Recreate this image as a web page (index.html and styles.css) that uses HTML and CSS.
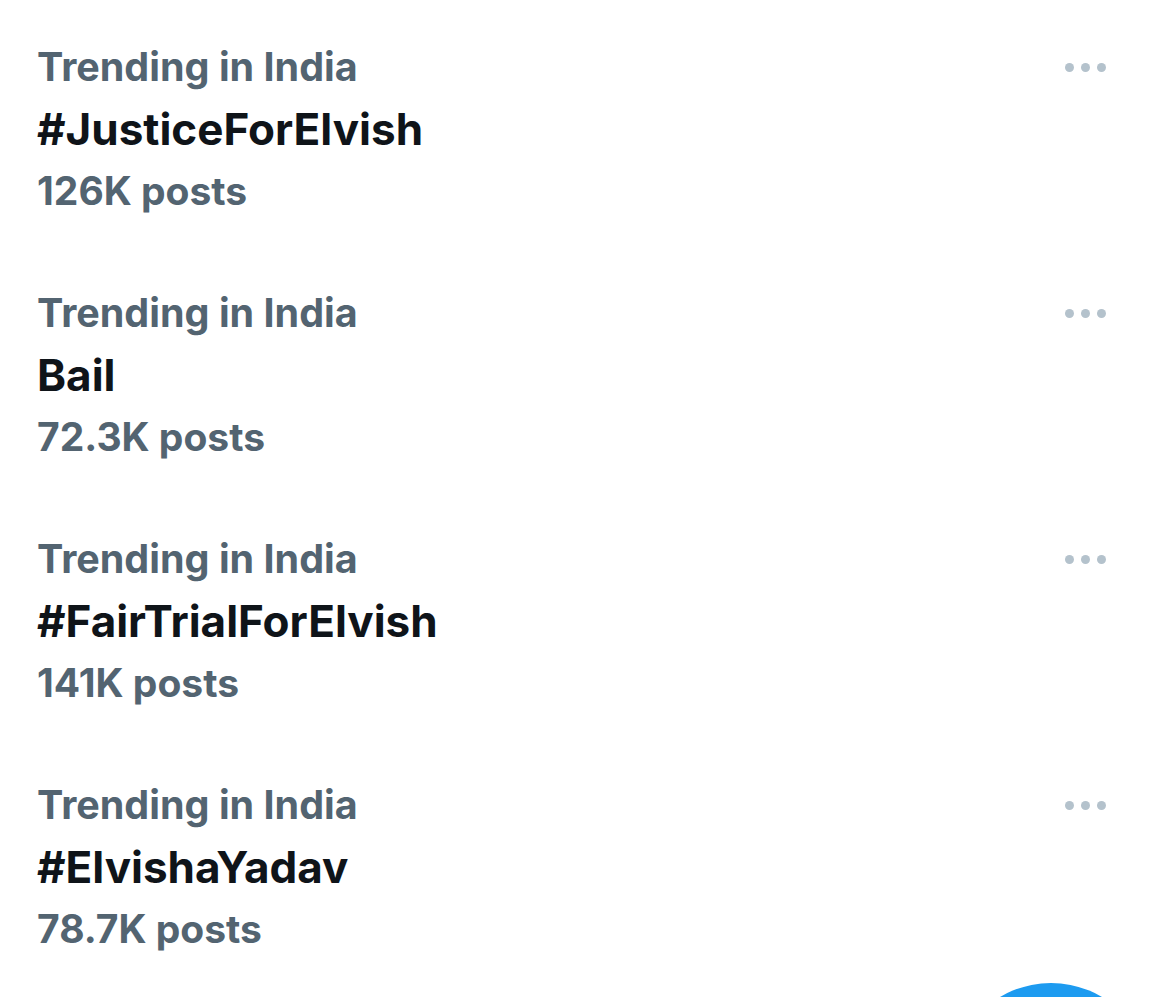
FILE: index.html
```html
<!DOCTYPE html>
<html lang="en">
<head>
    <meta charset="UTF-8">
    <meta name="viewport" content="width=device-width, initial-scale=1.0">
    <title>Trends</title>
    <link rel="stylesheet" href="styles.css">
</head>
<body>
<div id="page">
    <div id="trends">
        <div class="trend">
            <div class="trend-text">
                <div class="trend-meta">Trending in India</div>
                <div class="trend-name">#JusticeForElvish</div>
                <div class="trend-count">126K posts</div>
            </div>
            <button class="more-btn" aria-label="More"><span></span><span></span><span></span></button>
        </div>
        <div class="trend">
            <div class="trend-text">
                <div class="trend-meta">Trending in India</div>
                <div class="trend-name">Bail</div>
                <div class="trend-count">72.3K posts</div>
            </div>
            <button class="more-btn" aria-label="More"><span></span><span></span><span></span></button>
        </div>
        <div class="trend">
            <div class="trend-text">
                <div class="trend-meta">Trending in India</div>
                <div class="trend-name">#FairTrialForElvish</div>
                <div class="trend-count">141K posts</div>
            </div>
            <button class="more-btn" aria-label="More"><span></span><span></span><span></span></button>
        </div>
        <div class="trend">
            <div class="trend-text">
                <div class="trend-meta">Trending in India</div>
                <div class="trend-name">#ElvishaYadav</div>
                <div class="trend-count">78.7K posts</div>
            </div>
            <button class="more-btn" aria-label="More"><span></span><span></span><span></span></button>
        </div>
    </div>
    <div class="fab"></div>
</div>
</body>
</html>
```

FILE: styles.css
```css
body { margin: 0; background: #fff; font-family: Inter, "Noto Sans", Arial, sans-serif; }
#page { position: relative; height: 997px; overflow: hidden; }
#trends { padding: 36px 0 0 37px; }
.trend { display: flex; justify-content: space-between; align-items: flex-start; height: 246px; }
.trend-meta { font-size: 39.5px; font-weight: 700; color: #536471; line-height: 62px; }
.trend-name { font-size: 44px; font-weight: 700; color: #0f1419; line-height: 62px; }
.trend-count { font-size: 39px; font-weight: 700; color: #536471; line-height: 62px; }
.more-btn {
    display: flex;
    gap: 7px;
    margin: 27px 59px 0 0;
    padding: 0;
    border: none;
    background: none;
}
.more-btn span { width: 9px; height: 9px; border-radius: 50%; background: #b4c2cc; }
.fab {
    position: absolute;
    left: 951px;
    top: 983px;
    width: 200px;
    height: 200px;
    border-radius: 50%;
    background: #1d9bf0;
}
```
